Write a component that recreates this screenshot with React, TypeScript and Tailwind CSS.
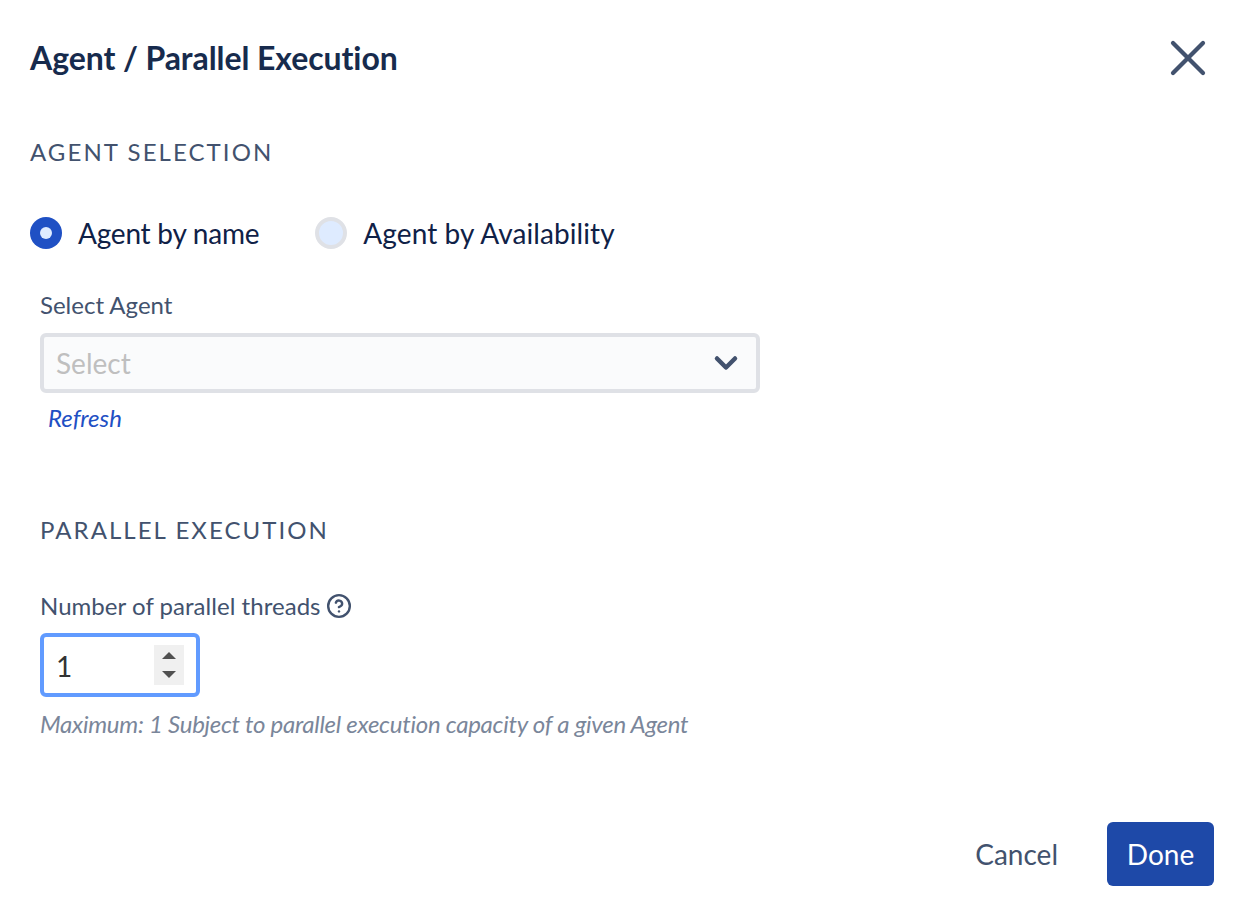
import { ChevronDown, CircleHelp, X } from 'lucide-react'

export default function App() {
  return (
    <div className="w-[1250px] h-[914px] bg-white font-['Lato',sans-serif] flex flex-col overflow-hidden">
      {/* Header */}
      <div className="flex items-center justify-between pl-[30px] pr-[32px] pt-[35px] h-[80px]">
        <h1 className="text-[32px] leading-[44px] tracking-[-0.08px] font-bold text-[#172b4d]">Agent / Parallel Execution</h1>
        <X size={60} strokeWidth={1.7} className="text-[#42526e] -my-[10px]" />
      </div>

      {/* Agent selection */}
      <div className="pl-[30px] mt-[56px]">
        <h2 className="text-[24px] leading-[32px] tracking-[2.07px] text-[#42526e]">AGENT SELECTION</h2>
        <div className="flex items-center mt-[49px] h-[32px]">
          <div className="w-[32px] h-[32px] rounded-full bg-[#1f50c4] flex items-center justify-center">
            <div className="w-[12px] h-[12px] rounded-full bg-[#deebff]" />
          </div>
          <span className="ml-[16px] text-[28px] tracking-[-0.23px] text-[#0f2147]">Agent by name</span>
          <div className="ml-[56px] w-[32px] h-[32px] rounded-full bg-[#deebff] border-[4px] border-[#dfe1e6]" />
          <span className="ml-[16px] text-[28px] tracking-[0.1px] text-[#0f2147]">Agent by Availability</span>
        </div>
      </div>

      <div className="pl-[40px] mt-[40px]">
        <label className="block text-[24px] leading-[32px] text-[#42526e]">Select Agent</label>
        <div className="mt-[12px] w-[720px] h-[60px] rounded-[6px] border-[4px] border-[#dfe1e6] bg-[#fafbfc] flex items-center justify-between pl-[12px] pr-[12px]">
          <span className="text-[28px] text-[#bfbfbf]">Select</span>
          <ChevronDown size={36} strokeWidth={3} className="text-[#42526e]" />
        </div>
        <a className="block ml-[8px] mt-[9px] text-[24px] leading-[32px] italic text-[#1f50c4]">Refresh</a>
      </div>

      {/* Parallel execution */}
      <div className="pl-[40px] mt-[80px]">
        <h2 className="text-[24px] leading-[32px] tracking-[2.05px] text-[#42526e]">PARALLEL EXECUTION</h2>
        <div className="flex items-center gap-[5px] mt-[44px] h-[32px]">
          <span className="text-[24px] tracking-[0.04px] text-[#42526e]">Number of parallel threads</span>
          <CircleHelp size={26} strokeWidth={2.2} className="text-[#42526e]" />
        </div>
        <div className="mt-[11px] w-[160px] h-[64px] rounded-[6px] border-[4px] border-[#619bff] flex items-center justify-between pl-[12px] pr-[12px]">
          <span className="text-[28px] pt-[2px] text-[#333333]">1</span>
          <div className="w-[30px] h-[40px] bg-[#f0f0f0] flex flex-col items-center justify-center gap-[12px]">
            <div className="w-0 h-0 border-x-[7px] border-x-transparent border-b-[7px] border-b-[#505050]" />
            <div className="w-0 h-0 border-x-[7px] border-x-transparent border-t-[7px] border-t-[#505050]" />
          </div>
        </div>
        <p className="mt-[11px] text-[24px] leading-[32px] tracking-[-0.26px] italic text-[#7a869a]">
          Maximum: 1 Subject to parallel execution capacity of a given Agent
        </p>
      </div>

      {/* Footer */}
      <div className="flex items-center justify-end gap-[49px] pr-[36px] mt-[82px]">
        <button className="text-[28px] text-[#42526e]">Cancel</button>
        <button className="w-[107px] h-[64px] rounded-[6px] bg-[#1e49a8] text-[28px] text-white">Done</button>
      </div>
    </div>
  )
}
